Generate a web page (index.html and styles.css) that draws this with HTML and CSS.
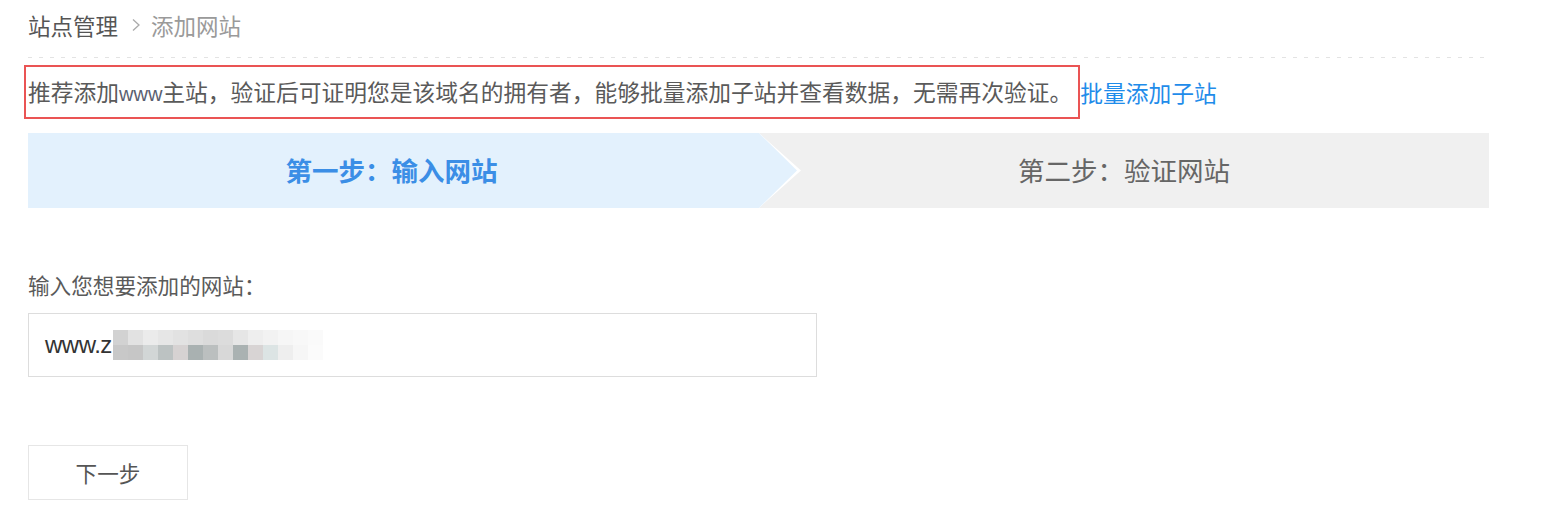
FILE: index.html
```html
<!DOCTYPE html>
<html lang="zh-CN">
<head>
<meta charset="utf-8">
<title>添加网站</title>
<link rel="stylesheet" href="styles.css">
</head>
<body>
<div class="page">
  <div class="crumbs">
    <span class="crumb-main">站点管理</span>
    <svg class="crumb-sep" width="10" height="14" viewBox="0 0 10 14"><path d="M2 1.5 L8 7 L2 12.5" fill="none" stroke="#aaa" stroke-width="1.3"/></svg>
    <span class="crumb-sub">添加网站</span>
  </div>
  <div class="dash"></div>
  <div class="notice-row">
    <div class="notice">推荐添加<span class="latin">www</span>主站，验证后可证明您是该域名的拥有者，能够批量添加子站并查看数据，无需再次验证。</div>
    <a class="batch-link" href="#">批量添加子站</a>
  </div>
  <div class="steps">
    <div class="step step-active">第一步：输入网站</div>
    <div class="step step-next">第二步：验证网站</div>
  </div>
  <div class="field-label">输入您想要添加的网站：</div>
  <div class="input-box">
    <span class="input-text">www.z</span>
    <div class="mosaic">
      <i style="background:#d2d2d2"></i><i style="background:#e2e2e2"></i><i style="background:#ebebeb"></i><i style="background:#e6e6e6"></i><i style="background:#e2e2e2"></i><i style="background:#dedede"></i><i style="background:#dadada"></i><i style="background:#dcdcdc"></i><i style="background:#e6e6e6"></i><i style="background:#eeeeee"></i><i style="background:#f2f2f2"></i><i style="background:#f6f6f6"></i><i style="background:#f8f8f8"></i><i style="background:#fafafa"></i>
      <i style="background:#c8c8c8"></i><i style="background:#c6c6c6"></i><i style="background:#d2d6d6"></i><i style="background:#bcc2c2"></i><i style="background:#d6d2d2"></i><i style="background:#a9b1b1"></i><i style="background:#bbbfbf"></i><i style="background:#d8d8d8"></i><i style="background:#aab2b2"></i><i style="background:#d8d4d4"></i><i style="background:#dce4e4"></i><i style="background:#eeeeee"></i><i style="background:#f6f6f6"></i><i style="background:#fbfbfb"></i>
    </div>
  </div>
  <button class="next-btn" type="button">下一步</button>
</div>
</body>
</html>
```

FILE: styles.css
```css
html, body {
  margin: 0;
  padding: 0;
  background: #ffffff;
}

body {
  font-family: "Noto Sans CJK SC", "Liberation Sans", sans-serif;
  color: #555555;
}

.page {
  width: 1461px;
  padding-left: 28px;
}

.crumbs {
  height: 50px;
  display: flex;
  align-items: center;
  font-size: 22.5px;
  line-height: 50px;
}

.crumb-main {
  color: #555555;
}

.crumb-sep {
  margin: 0 10px 0 13px;
}

.crumb-sub {
  color: #9a9a9a;
}

.dash {
  margin-top: 7px;
  height: 1px;
  background: repeating-linear-gradient(to right, #e3e3e3 0 4px, transparent 4px 11px);
}

.notice-row {
  margin-top: 7px;
  display: flex;
  align-items: center;
}

.notice {
  margin-left: -4px;
  border: 2px solid #ea5454;
  padding: 0 6px 0 2px;
  height: 50px;
  line-height: 50px;
  font-size: 22.75px;
  color: #5a5a5a;
  white-space: nowrap;
}

.latin {
  font-family: "Liberation Sans", sans-serif;
  font-size: 20px;
  color: #5a6070;
}

.batch-link {
  margin-left: 0;
  font-size: 22.75px;
  color: #1f8cea;
  text-decoration: none;
  white-space: nowrap;
}

.steps {
  margin-top: 14px;
  height: 75px;
  display: flex;
}

.step {
  flex: 1;
  display: flex;
  align-items: center;
  justify-content: center;
  font-size: 26.5px;
  padding-bottom: 2px;
}

.step-active {
  position: relative;
  z-index: 1;
  background: #e3f1fd;
  color: #3b8ee6;
  font-weight: bold;
  flex: 0 0 731px;
  padding-right: 4px;
  box-sizing: border-box;
}

.step-active::before,
.step-active::after {
  content: "";
  position: absolute;
  top: 0;
  left: 100%;
  height: 100%;
}

.step-active::before {
  width: 42px;
  background: #ffffff;
  clip-path: polygon(0 0, 100% 50%, 0 100%);
}

.step-active::after {
  width: 38px;
  background: #e3f1fd;
  clip-path: polygon(0 0, 100% 50%, 0 100%);
}

.step-next {
  background: #f0f0f0;
  color: #666666;
}

.field-label {
  margin-top: 65px;
  font-size: 21.6px;
  line-height: 24px;
  color: #5a5a5a;
}

.input-box {
  position: relative;
  margin-top: 16px;
  height: 62px;
  border: 1px solid #dddddd;
  display: flex;
  align-items: center;
  padding-left: 16px;
  box-sizing: content-box;
  width: 771px;
}

.input-text {
  font-family: "Liberation Sans", sans-serif;
  font-size: 24px;
  color: #333333;
  letter-spacing: -0.5px;
}

.mosaic {
  position: absolute;
  left: 84px;
  top: 16px;
  width: 210px;
  height: 30px;
  display: grid;
  grid-template-columns: repeat(14, 15px);
  grid-template-rows: 15px 15px;
  filter: blur(0.6px);
}

.mosaic i {
  display: block;
}

.next-btn {
  display: block;
  margin-top: 68px;
  width: 160px;
  height: 55px;
  border: 1px solid #e6e6e6;
  background: #ffffff;
  font-family: "Noto Sans CJK SC", sans-serif;
  font-size: 21.6px;
  color: #555555;
  padding: 0;
}
```
